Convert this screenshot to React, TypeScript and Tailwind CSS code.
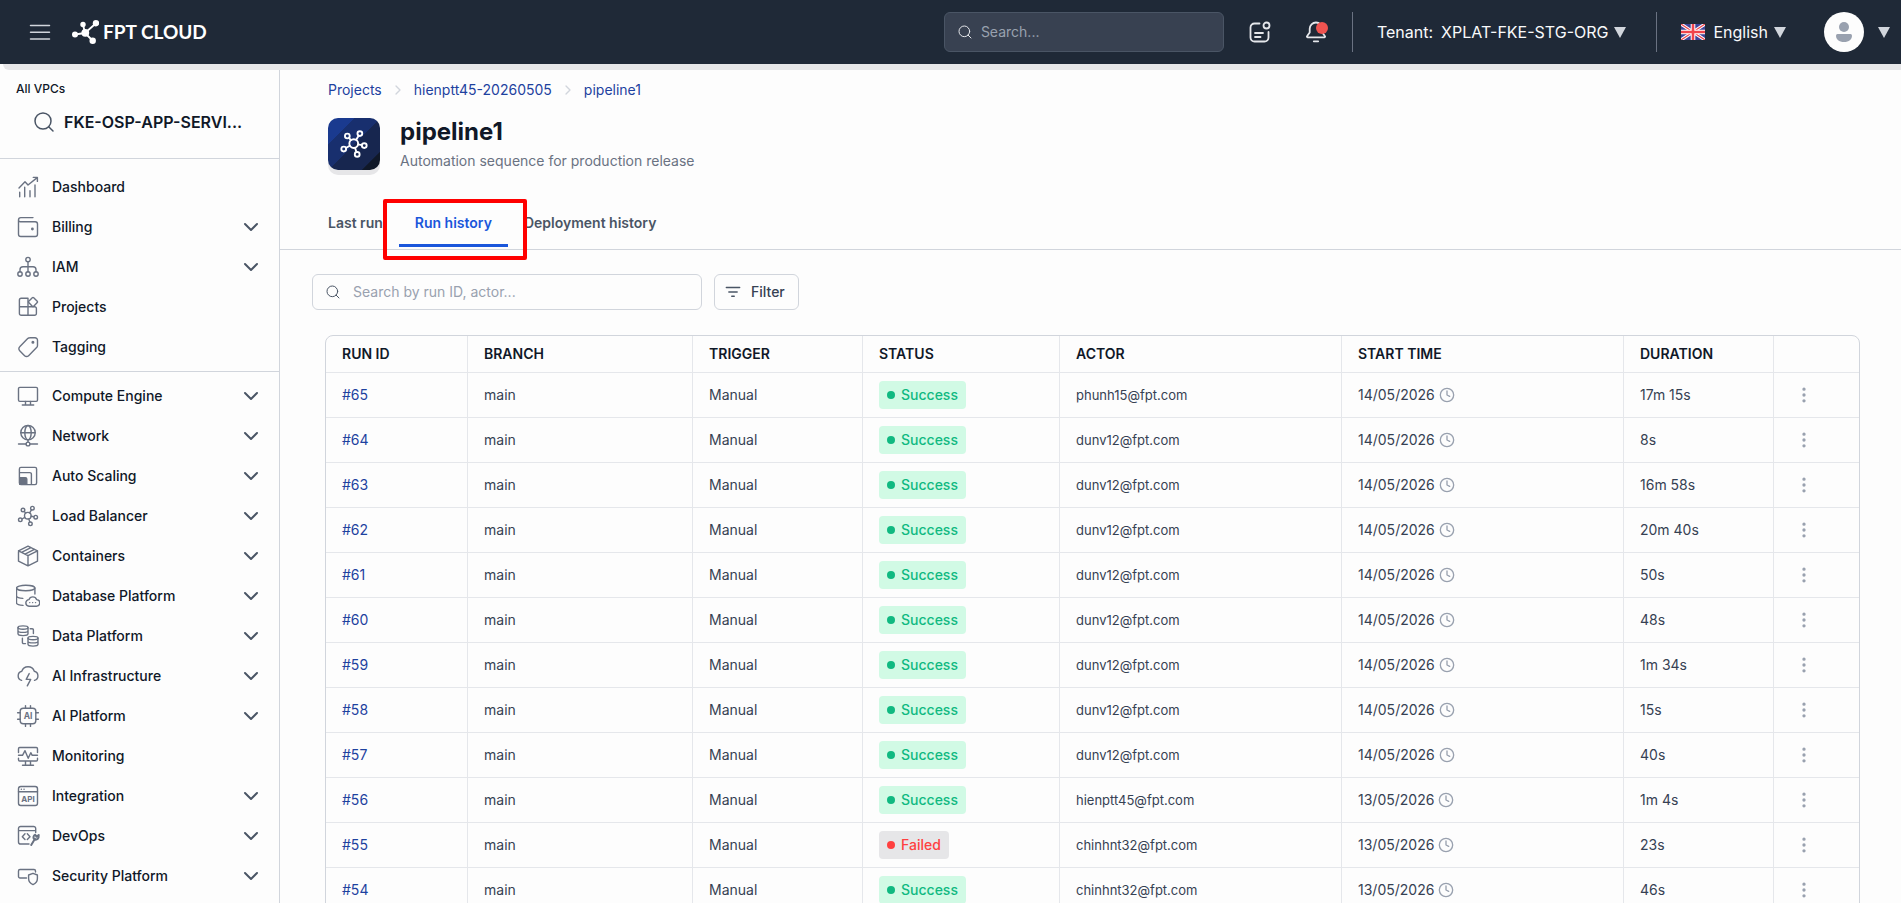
import React from "react";
import { ChevronDown, ChevronRight, Clock, EllipsisVertical, Search } from "lucide-react";

type IconProps = { children: React.ReactNode; className?: string };

const Icon: React.FC<IconProps> = ({ children, className = "size-6 text-gray-500" }) => (
  <svg
    viewBox="0 0 24 24"
    fill="none"
    stroke="currentColor"
    strokeWidth="1.4"
    strokeLinecap="round"
    strokeLinejoin="round"
    aria-hidden="true"
    className={`shrink-0 ${className}`}
  >
    {children}
  </svg>
);

const Hub = () => (
  <>
    <circle cx="11.8" cy="11.7" r="3.3" />
    <circle cx="7" cy="6" r="1.8" />
    <circle cx="16.4" cy="4.2" r="1.8" />
    <circle cx="4.3" cy="15.8" r="1.8" />
    <circle cx="19.7" cy="13.2" r="1.8" />
    <circle cx="14.4" cy="19.8" r="1.8" />
    <path d="M8.2 7.4l1.5 1.7M15.5 5.8l-1.9 3M6 15l2.8-1.7M15.1 12.3l2.8.5M12.8 14.9l1 3.1" />
  </>
);

const icons = {
  dashboard: (
    <path d="M3 13l6-6.2 3 3.2 9.2-7.4M17.3 2.4h4.1v4M3.7 17.3v4.4M8.7 12.3v9.4M14 15.7v6M19 10v11.7" />
  ),
  billing: (
    <>
      <path d="M17 2.6H4.8a2.3 2.3 0 0 0-2.3 2.3v14.3a2.3 2.3 0 0 0 2.3 2.3h14.4a2.3 2.3 0 0 0 2.3-2.3V9a2.3 2.3 0 0 0-2.3-2.3H4.3a1.8 1.8 0 0 1-1.8-1.8" />
      <circle cx="16.4" cy="14" r=".7" fill="currentColor" />
    </>
  ),
  iam: (
    <>
      <circle cx="12" cy="4.6" r="2.2" />
      <circle cx="4" cy="19" r="2.2" />
      <circle cx="12" cy="19" r="2.2" />
      <circle cx="20" cy="19" r="2.2" />
      <path d="M12 6.8v10M4 16.8v-2.1a3 3 0 0 1 3-3h10a3 3 0 0 1 3 3v2.1" />
    </>
  ),
  projects: (
    <>
      <path d="M12 3.3H5.2a1.8 1.8 0 0 0-1.8 1.8v13.4a1.8 1.8 0 0 0 1.8 1.8h13.4a1.8 1.8 0 0 0 1.8-1.8v-5a1.8 1.8 0 0 0-1.8-1.8H3.4M12 3.3v17" />
      <rect x="13.5" y="3.4" width="7" height="7" rx="1" transform="rotate(45 17 6.9)" />
    </>
  ),
  tagging: (
    <>
      <path d="M13.8 2.7H19a2.5 2.5 0 0 1 2.5 2.5v5.2c0 .8-.3 1.6-.9 2.2l-8 8.1a2.8 2.8 0 0 1-4 0l-4.9-4.9a2.8 2.8 0 0 1 0-4l8-8.2c.6-.6 1.3-.9 2.2-.9z" />
      <circle cx="16.9" cy="7.2" r=".8" fill="currentColor" />
    </>
  ),
  compute: (
    <>
      <rect x="2.5" y="3.4" width="19" height="14" rx="1.3" />
      <path d="M9.5 17.4v3.4M14.5 17.4v3.4M6.3 21h11.4" />
    </>
  ),
  network: (
    <>
      <circle cx="12" cy="8.7" r="7.2" />
      <ellipse cx="12" cy="8.7" rx="3.2" ry="7.2" />
      <path d="M4.8 8.7h14.4M12 15.9v2.3M2.5 20H10M14 20h7.5" />
      <circle cx="12" cy="20" r="1.9" />
    </>
  ),
  scaling: (
    <>
      <rect x="3.4" y="3.4" width="17.2" height="17.2" rx="1.5" />
      <path d="M3.8 8.6h10a1.6 1.6 0 0 1 1.6 1.6v10" />
      <path d="M3.8 13.7h5.6a1.4 1.4 0 0 1 1.4 1.4v5.3h-7z" fill="currentColor" />
    </>
  ),
  balancer: <Hub />,
  containers: (
    <path d="M12 2.2l9.5 4.6v10.4L12 21.9l-9.5-4.7V6.8zM2.5 6.8l9.5 4.8 9.5-4.8M12 11.6v10.3M5.6 8.3l9.3-4.7M9 10.1l9.4-4.8" />
  ),
  database: (
    <>
      <ellipse cx="9.7" cy="4" rx="9.2" ry="2.7" />
      <path d="M.5 4v15c0 1.2 2.5 2.1 6.5 2.4M18.9 4v6M.5 11.7c0 1.3 2.6 2.4 6.3 2.7" />
      <path d="M13.3 22.2a3.3 3.3 0 0 1-.3-6.6 4 4 0 0 1 7.6 0 3.3 3.3 0 0 1-.3 6.6z" />
      <path d="M13.7 18.6h.1M16.6 18.6h.1M19.5 18.6h.1" />
    </>
  ),
  data: (
    <>
      <ellipse cx="7" cy="3.6" rx="5" ry="1.7" />
      <path d="M2 3.6v6.2c0 1 2.2 1.8 5 1.8s5-.8 5-1.8V3.6M2 6.7c0 1 2.2 1.7 5 1.7s5-.7 5-1.7" />
      <ellipse cx="17" cy="14.1" rx="5" ry="1.7" />
      <path d="M12 14.1v6.2c0 1 2.2 1.8 5 1.8s5-.8 5-1.8v-6.2M12 17.2c0 1 2.2 1.7 5 1.7s5-.7 5-1.7M14.2 4.7h2a1.2 1.2 0 0 1 1.2 1.2v3.7M6.4 14.2v4.2a1.2 1.2 0 0 0 1.2 1.2h1.9" />
    </>
  ),
  aiInfra: (
    <path d="M5.6 16.3a4.7 4.7 0 0 1 .2-9.1 6.6 6.6 0 0 1 12.5 0 4.7 4.7 0 0 1 .2 9.1M13.2 9.6l-3 5.8h4.5l-3.4 6.4" />
  ),
  aiPlatform: (
    <>
      <rect x="4.2" y="4.2" width="15.6" height="15.6" rx="3" />
      <path d="M9.5 4.2V1.6M14.5 4.2V1.6M9.5 22.4v-2.6M14.5 22.4v-2.6M4.2 8.8H1.6M4.2 15.2H1.6M22.4 8.8h-2.6M22.4 15.2h-2.6" />
      <text x="12" y="15" textAnchor="middle" fontSize="8.5" fontWeight="700" fill="currentColor" stroke="none">
        AI
      </text>
    </>
  ),
  monitoring: (
    <path d="M2.5 8.5V4.7a1.2 1.2 0 0 1 1.2-1.2h16.6a1.2 1.2 0 0 1 1.2 1.2v3.8M2.5 14.2v1.6A1.2 1.2 0 0 0 3.7 17h16.6a1.2 1.2 0 0 0 1.2-1.2v-1.6M2.5 11.3h4l2.5-4.6 3.2 7.6 2.6-5.6 1.4 2.6h5.3M9.5 17v3.8M14.5 17v3.8M6.5 21.2h11" />
  ),
  integration: (
    <>
      <rect x="2.5" y="2.5" width="19" height="19" rx="2.3" />
      <path d="M2.5 7.8h19M5.3 5.2h.1M8 5.2h.1" />
      <text x="12" y="18" textAnchor="middle" fontSize="8" fontWeight="700" fill="currentColor" stroke="none">
        API
      </text>
    </>
  ),
  devops: (
    <>
      <path d="M13 20H4.6a2.1 2.1 0 0 1-2.1-2.1V4.6a2.1 2.1 0 0 1 2.1-2.1h13a2.1 2.1 0 0 1 2.1 2.1v4M2.5 6.6h17.2M9 9.8l-2.7 2.9L9 15.6M11.3 9.8l2.7 2.9-2.7 2.9" />
      <path d="M15.2 21l3.8-6.2M19.2 10.8c-1.6.6-2.3 2.5-1.3 4 1.3 1.4 3.7 1 4.6-1.2l.2-2.6-2.2 1.8z" strokeWidth="2" />
    </>
  ),
  security: (
    <>
      <path d="M10.5 14H4a1.5 1.5 0 0 1-1.500-1.500V7A1.500 1.500 0 0 1 4 5.500h14A1.500 1.500 0 0 1 19.500 7v1" />
      <path d="M17 9.300l4.400 1.700v3.500c0 2.800-1.700 5-4.400 6.100-2.700-1.100-4.400-3.300-4.400-6.100V11z" />
    </>
  ),
};

type NavItem = { label: string; icon: React.ReactNode; expandable?: boolean };

const mainNav: NavItem[] = [
  { label: "Dashboard", icon: icons.dashboard },
  { label: "Billing", icon: icons.billing, expandable: true },
  { label: "IAM", icon: icons.iam, expandable: true },
  { label: "Projects", icon: icons.projects },
  { label: "Tagging", icon: icons.tagging },
];

const serviceNav: NavItem[] = [
  { label: "Compute Engine", icon: icons.compute, expandable: true },
  { label: "Network", icon: icons.network, expandable: true },
  { label: "Auto Scaling", icon: icons.scaling, expandable: true },
  { label: "Load Balancer", icon: icons.balancer, expandable: true },
  { label: "Containers", icon: icons.containers, expandable: true },
  { label: "Database Platform", icon: icons.database, expandable: true },
  { label: "Data Platform", icon: icons.data, expandable: true },
  { label: "AI Infrastructure", icon: icons.aiInfra, expandable: true },
  { label: "AI Platform", icon: icons.aiPlatform, expandable: true },
  { label: "Monitoring", icon: icons.monitoring },
  { label: "Integration", icon: icons.integration, expandable: true },
  { label: "DevOps", icon: icons.devops, expandable: true },
  { label: "Security Platform", icon: icons.security, expandable: true },
];

const runs = [
  { id: "#65", status: "Success", actor: "phunh15@fpt.com", start: "14/05/2026", duration: "17m 15s" },
  { id: "#64", status: "Success", actor: "dunv12@fpt.com", start: "14/05/2026", duration: "8s" },
  { id: "#63", status: "Success", actor: "dunv12@fpt.com", start: "14/05/2026", duration: "16m 58s" },
  { id: "#62", status: "Success", actor: "dunv12@fpt.com", start: "14/05/2026", duration: "20m 40s" },
  { id: "#61", status: "Success", actor: "dunv12@fpt.com", start: "14/05/2026", duration: "50s" },
  { id: "#60", status: "Success", actor: "dunv12@fpt.com", start: "14/05/2026", duration: "48s" },
  { id: "#59", status: "Success", actor: "dunv12@fpt.com", start: "14/05/2026", duration: "1m 34s" },
  { id: "#58", status: "Success", actor: "dunv12@fpt.com", start: "14/05/2026", duration: "15s" },
  { id: "#57", status: "Success", actor: "dunv12@fpt.com", start: "14/05/2026", duration: "40s" },
  { id: "#56", status: "Success", actor: "hienptt45@fpt.com", start: "13/05/2026", duration: "1m 4s" },
  { id: "#55", status: "Failed", actor: "chinhnt32@fpt.com", start: "13/05/2026", duration: "23s" },
  { id: "#54", status: "Success", actor: "chinhnt32@fpt.com", start: "13/05/2026", duration: "46s" },
];

const columns = [
  { title: "RUN ID", width: "w-[142px]" },
  { title: "BRANCH", width: "w-[225px]" },
  { title: "TRIGGER", width: "w-[170px]" },
  { title: "STATUS", width: "w-[197px]" },
  { title: "ACTOR", width: "w-[282px]" },
  { title: "START TIME", width: "w-[282px]" },
  { title: "DURATION", width: "w-[150px]" },
  { title: "", width: "w-[85px]" },
];

const Caret = () => (
  <svg viewBox="0 0 12 11" className="h-[11px] w-3 shrink-0 fill-gray-300" aria-hidden="true">
    <path d="M0 0h12L6 11z" />
  </svg>
);

const Flag = () => (
  <svg viewBox="0 0 24 16" className="h-4 w-6 shrink-0" aria-hidden="true">
    <path fill="#3d4399" d="M0 0h24v16H0z" />
    <path stroke="#fff" strokeWidth="3.2" d="M0 0l24 16M24 0L0 16" />
    <path stroke="#f0444b" strokeWidth="1.2" d="M0 0l24 16M24 0L0 16" />
    <path stroke="#fff" strokeWidth="4.6" d="M12 0v16M0 8h24" />
    <path stroke="#f0444b" strokeWidth="2.6" d="M12 0v16M0 8h24" />
  </svg>
);

const TopBar: React.FC = () => (
  <header className="flex h-16 shrink-0 items-center bg-[#1f2937] pr-[11px] pl-7 text-base text-gray-50">
    <button type="button" aria-label="Toggle menu" className="text-gray-300">
      <svg viewBox="0 0 24 24" className="size-6" stroke="currentColor" strokeWidth="1.5" strokeLinecap="round" aria-hidden="true">
        <path d="M2.5 5.5h19M2.5 12.3h19M2.5 19h19" />
      </svg>
    </button>
    <a href="#" className="ml-5 flex items-center gap-1 text-white">
      <svg viewBox="0 0 27 24" className="h-6 w-[27px]" fill="currentColor" stroke="currentColor" aria-hidden="true">
        <path d="M13 13L3 14.5M13 13l-2-8.5M13 13L24 3.3M13 13l7.5 7.5" strokeWidth="1.8" />
        <g stroke="none">
          <circle cx="13.3" cy="12.8" r="3.9" />
          <circle cx="3" cy="14.5" r="3" />
          <circle cx="11" cy="4.5" r="2.7" />
          <circle cx="24" cy="3.2" r="3.2" />
          <circle cx="20.7" cy="20.7" r="3.2" />
        </g>
      </svg>
      <span className="font-[Lato,sans-serif] text-[19px] font-bold">FPT CLOUD</span>
    </a>

    <label className="ml-auto flex h-10 w-[280px] items-center gap-2 rounded-md border border-gray-600 bg-[#384151] px-3">
      <Search className="size-4 shrink-0 text-gray-200" strokeWidth={1.5} />
      <input
        type="search"
        aria-label="Search"
        placeholder="Search..."
        className="w-full min-w-0 bg-transparent text-sm outline-none placeholder:text-gray-400"
      />
    </label>
    <button type="button" aria-label="What's new" className="ml-6">
      <Icon className="size-6 text-gray-200">
        <path d="M11.5 3.5H6.5A4 4 0 0 0 2.5 7.5v10a4 4 0 0 0 4 4h10a4 4 0 0 0 4-4v-5.5" strokeWidth="1.8" />
        <circle cx="18.5" cy="5.5" r="3" strokeWidth="1.8" />
        <path d="M7 13h8M7 17h5.5" strokeWidth="1.8" />
      </Icon>
    </button>
    <button type="button" aria-label="Notifications" className="relative ml-8">
      <Icon className="size-6 text-gray-200">
        <path d="M12 2.5a6.3 6.3 0 0 0-6.3 6.3v3.7L3 16.3a.6.6 0 0 0 .5 1h17a.6.6 0 0 0 .5-1l-2.7-3.8V8.8A6.3 6.3 0 0 0 12 2.5zM9.8 21.3h4.4" strokeWidth="1.8" />
      </Icon>
      <span className="absolute top-0.5 right-0 size-3 rounded-full bg-[#ef5350]" />
    </button>
    <span className="ml-6 h-10 w-px bg-gray-500" />
    <button type="button" className="ml-6 flex items-center gap-2">
      <span>Tenant:</span>
      <span className="flex items-center gap-1.5">
        XPLAT-FKE-STG-ORG <Caret />
      </span>
    </button>
    <span className="ml-[30px] h-10 w-px bg-gray-500" />
    <button type="button" className="ml-6 flex items-center gap-2">
      <Flag />
      <span className="flex items-center gap-1.5">
        English <Caret />
      </span>
    </button>
    <button type="button" aria-label="Account" className="ml-[38px] flex items-center gap-3.5">
      <span className="flex size-10 items-center justify-center rounded-full bg-[#fdfdfd]">
        <svg viewBox="0 0 20 20" className="size-5 fill-gray-400" aria-hidden="true">
          <circle cx="10" cy="5" r="5" />
          <path d="M3.5 12h13A1.5 1.5 0 0 1 18 13.5C18 17.5 15 20 10 20s-8-2.5-8-6.5A1.5 1.5 0 0 1 3.5 12z" />
        </svg>
      </span>
      <Caret />
    </button>
  </header>
);

const NavGroup: React.FC<{ items: NavItem[] }> = ({ items }) => (
  <ul>
    {items.map((item) => (
      <li key={item.label}>
        <a href="#" className="flex h-10 items-center gap-3 pr-4 pl-4 text-sm font-medium text-gray-900">
          <Icon>{item.icon}</Icon>
          <span className="flex-1">{item.label}</span>
          {item.expandable && <ChevronDown className="size-6 text-gray-600" />}
        </a>
      </li>
    ))}
  </ul>
);

const Sidebar: React.FC = () => (
  <aside className="w-[280px] shrink-0 overflow-hidden border-r border-gray-300">
    <div className="border-b border-gray-300 px-4 pt-2.5 pb-6">
      <p className="text-xs leading-[18px] font-medium text-gray-900">All VPCs</p>
      <button type="button" className="mt-[11px] flex h-[25px] items-center gap-2 pl-4 text-base font-semibold text-gray-900">
        <Search className="size-6 shrink-0 text-gray-600" strokeWidth={1.5} />
        FKE-OSP-APP-SERVI...
      </button>
    </div>
    <nav>
      <div className="border-b border-gray-300 pt-2 pb-1">
        <NavGroup items={mainNav} />
      </div>
      <div className="pt-1">
        <NavGroup items={serviceNav} />
      </div>
    </nav>
  </aside>
);

const StatusBadge: React.FC<{ status: string }> = ({ status }) => {
  const failed = status === "Failed";
  return (
    <span
      className={`inline-flex h-7 items-center gap-1.5 rounded px-2 align-middle font-medium ${
        failed ? "bg-[#e6e6e8] text-[#ff4040]" : "bg-[#d1fae5] text-[#10b981]"
      }`}
    >
      <span className="size-2 rounded-full bg-current" />
      {status}
    </span>
  );
};

const RunsTable: React.FC = () => (
  <div className="mt-[25px] mr-[41px] ml-[45px] overflow-hidden rounded-lg border border-gray-300">
    <table className="w-full table-fixed border-separate border-spacing-0 text-left text-sm text-gray-700">
      <thead>
        <tr className="h-[37px]">
          {columns.map((col) => (
            <th
              key={col.title}
              aria-label={col.title || "Actions"}
              className={`${col.width} border-r border-b border-gray-200 px-4 font-semibold text-gray-900 last:border-r-0`}
            >
              {col.title}
            </th>
          ))}
        </tr>
      </thead>
      <tbody className="[&_td]:border-r [&_td]:border-b [&_td]:border-gray-200 [&_td]:px-4 [&_td:last-child]:border-r-0">
        {runs.map((run) => (
          <tr key={run.id} className="h-[45px]">
            <td>
              <a href="#" className="text-[#1e429f]">
                {run.id}
              </a>
            </td>
            <td>main</td>
            <td>Manual</td>
            <td>
              <StatusBadge status={run.status} />
            </td>
            <td className="text-[13px]">{run.actor}</td>
            <td>
              <span className="flex items-center gap-1">
                {run.start} <Clock className="size-4 text-gray-400" />
              </span>
            </td>
            <td>{run.duration}</td>
            <td>
              <button type="button" aria-label={`Actions for run ${run.id}`} className="flex w-7 justify-center text-gray-400">
                <EllipsisVertical className="size-5" />
              </button>
            </td>
          </tr>
        ))}
      </tbody>
    </table>
  </div>
);

const App: React.FC = () => (
  <div className="flex h-screen flex-col overflow-hidden bg-[#fdfdfd] font-[Inter,sans-serif]">
    <TopBar />
    <div className="ml-[3px] h-1.5 shrink-0 rounded-bl-lg bg-[#e6e6e8]" />
    <div className="flex min-h-0 flex-1">
      <Sidebar />
      <main className="min-w-0 flex-1 overflow-hidden">
        <div className="border-b border-gray-300 pt-2.5 pl-12">
          {/* Breadcrumb */}
          <nav aria-label="Breadcrumb" className="flex h-5 items-center gap-2 text-sm text-[#1e429f]">
            <a href="#">Projects</a>
            <ChevronRight className="size-4 text-gray-300" />
            <a href="#">hienptt45-20260505</a>
            <ChevronRight className="size-4 text-gray-300" />
            <a href="#">pipeline1</a>
          </nav>

          {/* Title */}
          <div className="mt-[18px] flex gap-5">
            <div className="flex size-[52px] items-center justify-center rounded-[10px] bg-[linear-gradient(135deg,#1a3a8f_0%,#1a3a8f_25%,#182f6e_26%,#182f6e_50%,#17264f_51%,#17264f_82%,#101828_83%)] text-white shadow-[0_5px_0_#e6e6e8]">
              <Icon className="size-8 text-white">
                <Hub />
              </Icon>
            </div>
            <div>
              <h1 className="text-2xl leading-7 font-bold text-gray-900">pipeline1</h1>
              <p className="mt-[5px] text-sm text-gray-500">Automation sequence for production release</p>
            </div>
          </div>

          {/* Tabs */}
          <div role="tablist" className="mt-[31px] -ml-4 flex pb-0.5 text-sm font-semibold text-gray-600">
            <button type="button" role="tab" aria-selected="false" className="h-[45px] border-b-3 border-transparent px-4">
              Last run
            </button>
            <button
              type="button"
              role="tab"
              aria-selected="true"
              className="relative h-[45px] border-b-3 border-[#1a56db] px-4 text-[#1a56db]"
            >
              Run history
              <span className="absolute -top-[3px] -right-[19px] -left-4 z-10 h-[61px] rounded-xs border-4 border-[#ff0000]" />
            </button>
            <button type="button" role="tab" aria-selected="false" className="h-[45px] border-b-3 border-transparent px-4">
              Deployment history
            </button>
          </div>
        </div>

        {/* Toolbar */}
        <div className="mt-6 ml-8 flex gap-3 text-sm">
          <label className="flex h-9 w-[390px] items-center gap-3 rounded-md border border-gray-300 px-3">
            <Search className="size-4 shrink-0 text-gray-600" strokeWidth={1.5} />
            <input
              type="search"
              aria-label="Search runs"
              placeholder="Search by run ID, actor..."
              className="w-full min-w-0 bg-transparent outline-none placeholder:text-gray-400"
            />
          </label>
          <button
            type="button"
            className="flex h-9 w-[85px] items-center gap-2 rounded-md border border-gray-300 pl-2 font-medium text-gray-700"
          >
            <Icon className="size-5 text-gray-600">
              <path d="M4 6.5h16M7 12h10M10.5 17h3" strokeWidth="1.7" />
            </Icon>
            Filter
          </button>
        </div>

        <RunsTable />
      </main>
    </div>
  </div>
);

export default App;
